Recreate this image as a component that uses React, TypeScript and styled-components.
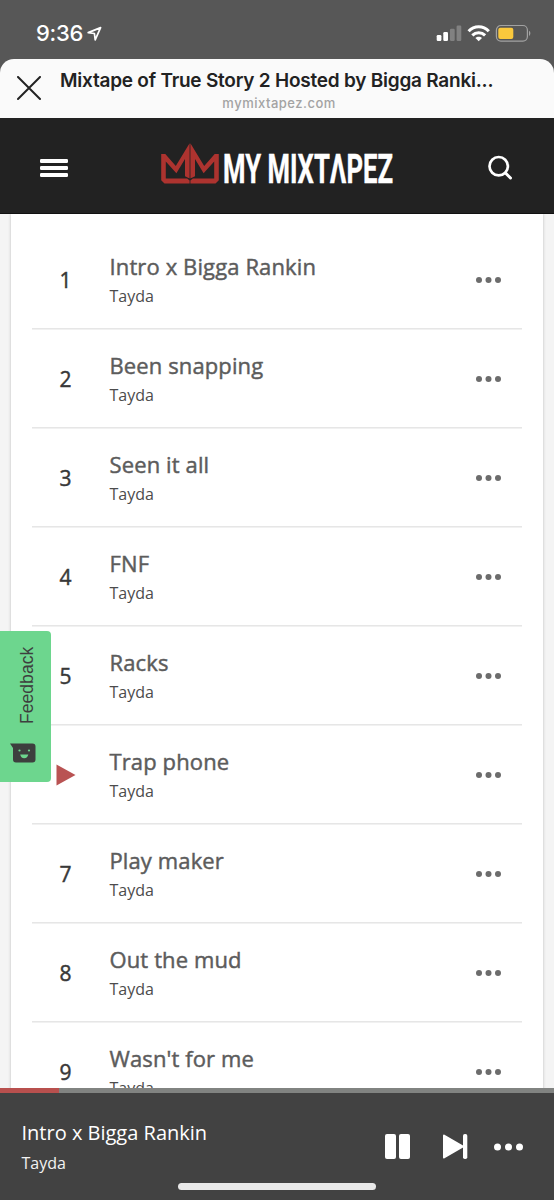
import React from "react";
import styled, { createGlobalStyle } from "styled-components";

const GlobalStyle = createGlobalStyle`
  * { box-sizing: border-box; }
  html, body { margin: 0; padding: 0; background: #575757; }
  body { font-family: "Open Sans", "Noto Sans", sans-serif; }
  button { border: 0; padding: 0; background: none; color: inherit; font: inherit; display: flex; }
`;

const Screen = styled.div`
  width: 554px;
  height: 1200px;
  display: flex;
  flex-direction: column;
  overflow: hidden;
  position: relative;
  background: #575757;
`;

const StatusBar = styled.div`
  height: 59px;
  flex: none;
  display: flex;
  justify-content: space-between;
  align-items: flex-start;
  padding: 20px 23px 0 36px;
  color: #fff;
`;

const Clock = styled.div`
  display: flex;
  align-items: flex-start;
  font: 500 22px/27px Inter, sans-serif;
  letter-spacing: -0.3px;
`;

const LocationIcon = styled.svg`
  margin: 6px 0 0 4px;
`;

const StatusIcons = styled.svg`
  display: block;
  margin-top: 4px;
`;

const BrowserBar = styled.header`
  height: 59px;
  flex: none;
  display: flex;
  background: #fafafa;
  border-radius: 14px 14px 0 0;
  padding: 0 61px 0 17px;
`;

const CloseButton = styled.button`
  margin-top: 17px;
  width: 43px;
  flex: none;
`;

const PageInfo = styled.div`
  flex: 1;
  display: flex;
  flex-direction: column;
  align-items: center;
  white-space: nowrap;
  font-family: Inter, sans-serif;
`;

const PageTitle = styled.div`
  margin-top: 9px;
  font-size: 19px;
  line-height: 25px;
  font-weight: 600;
  letter-spacing: -0.23px;
  color: #222;
`;

const PageHost = styled.div`
  margin-top: 2px;
  margin-left: 5px;
  font-size: 13px;
  line-height: 16px;
  font-weight: 500;
  letter-spacing: 0.5px;
  color: #a3a3a3;
`;

const SiteHeader = styled.nav`
  height: 96px;
  flex: none;
  display: flex;
  align-items: center;
  justify-content: space-between;
  padding: 4px 40px 0 40px;
  background: #222;
  border-bottom: 1px solid #111;
`;

const Logo = styled.svg`
  display: block;
  margin-right: 1px;
`;

const Page = styled.main`
  flex: 1;
  min-height: 0;
  overflow: hidden;
  padding: 0 11px;
  background: #f4f4f4;
`;

const TrackList = styled.ol`
  list-style: none;
  margin: 0;
  padding: 16px 21px 0;
  background: #fff;
  box-shadow: 0 0 3px rgba(0, 0, 0, 0.22);
`;

const Track = styled.li`
  height: 99px;
  display: flex;
  align-items: center;
  box-shadow: inset 0 -1px #e6e6e6, 0 1px #f1f1f1;
`;

const TrackNumber = styled.div`
  width: 67px;
  display: flex;
  justify-content: center;
  font-size: 21px;
  line-height: 28px;
  color: #383838;
  -webkit-text-stroke: 0.45px #383838;
`;

const TrackText = styled.div`
  flex: 1;
  padding: 0 0 2px 10.5px;
`;

const TrackTitle = styled.div`
  font-size: 22px;
  line-height: 30px;
  letter-spacing: 0.12px;
  color: #5c5c5c;
  -webkit-text-stroke: 0.45px #5c5c5c;
`;

const Artist = styled.div`
  font-size: 16px;
  line-height: 22px;
  margin-top: 4px;
`;

const TrackArtist = styled(Artist)`
  color: #4c4c4c;
`;

const PlayerArtist = styled(Artist)`
  color: #f2f2f2;
`;

const MoreButton = styled.button`
  margin-right: 21px;
`;

const Player = styled.footer`
  height: 112px;
  flex: none;
  background: #424242;
  color: #fff;
`;

const Progress = styled.div`
  height: 5px;
  background: #818381;
`;

const Elapsed = styled.div`
  width: 59px;
  height: 5px;
  background: #b8504e;
`;

const PlayerBody = styled.div`
  display: flex;
  height: 93px;
  padding: 24px 31px 0 21.5px;
  justify-content: space-between;
`;

const NowPlaying = styled.div`
  font-size: 20px;
  line-height: 31px;
`;

const Controls = styled.div`
  display: flex;
  height: 59px;
  align-items: center;
`;

const ControlButton = styled.button<{ $gap?: number }>`
  margin-right: ${(p) => p.$gap ?? 0}px;
`;

const HomeIndicator = styled.div`
  width: 198px;
  height: 7px;
  margin: -3px auto 0;
  border-radius: 4px;
  background: #e8e8e8;
`;

const FeedbackTab = styled.aside`
  position: absolute;
  left: 0;
  top: 631px;
  width: 51px;
  height: 151px;
  display: flex;
  flex-direction: column;
  align-items: center;
  gap: 18px;
  padding-top: 15px;
  background: #6dd68e;
  border-radius: 0 4px 4px 0;
`;

const FeedbackLabel = styled.span`
  height: 79px;
  writing-mode: vertical-rl;
  transform: rotate(180deg);
  font: 17.6px/22px "Liberation Sans", sans-serif;
  color: #3d3f3e;
  text-align: center;
  margin-left: 2px;
`;

const FaceIcon = styled.svg`
  margin-right: 5px;
`;

function Dots({ width, r, color }: { width: number; r: number; color: string }) {
  return (
    <svg width={width} height="10" fill={color}>
      <circle cx={r} cy="5" r={r} />
      <circle cx={width / 2} cy="5" r={r} />
      <circle cx={width - r} cy="5" r={r} />
    </svg>
  );
}

const tracks = [
  "Intro x Bigga Rankin",
  "Been snapping",
  "Seen it all",
  "FNF",
  "Racks",
  "Trap phone",
  "Play maker",
  "Out the mud",
  "Wasn't for me",
];
const playing = 5;

export default function App() {
  return (
    <Screen>
      <GlobalStyle />
      <StatusBar>
        <Clock>
          9:36
          <LocationIcon width="16" height="16" viewBox="0 0 16 16">
            <path d="M1.2 6.6L13.6 1.6L8.2 13.8L7.4 7.5Z" fill="none" stroke="#fff" strokeWidth="1.7" strokeLinejoin="round" />
          </LocationIcon>
        </Clock>
        <StatusIcons width="95" height="19" viewBox="0 0 95 19">
          <g fill="#fff">
            <rect x="0.7" y="11" width="4.7" height="6" rx="1.2" />
            <rect x="7.3" y="8" width="4.7" height="9" rx="1.2" />
            <g opacity="0.25">
              <rect x="14" y="4.7" width="4.7" height="12.3" rx="1.2" />
              <rect x="20.6" y="1.5" width="4.7" height="15.5" rx="1.2" />
            </g>
          </g>
          <g fill="none" stroke="#fff" strokeWidth="3">
            <path d="M32.6 7.3C38.2 1.2 47.2 1.2 52.8 7.3" />
            <path d="M36.3 11.4C39.9 7.8 45.5 7.8 49.1 11.4" />
          </g>
          <path d="M39.4 14C41.1 12.2 44.3 12.2 46 14L42.7 17.2Z" fill="#fff" />
          <rect x="60.4" y="1.5" width="31" height="15.6" rx="4.5" fill="none" stroke="#a2a2a2" strokeWidth="1.2" />
          <rect x="62.3" y="3.7" width="15" height="11.4" rx="2" fill="#fac83c" />
          <path d="M93 6.8C94.8 7.5 94.8 11.2 93 11.9Z" fill="#a2a2a2" />
        </StatusIcons>
      </StatusBar>

      <BrowserBar>
        <CloseButton aria-label="Close">
          <svg width="25" height="25" viewBox="0 0 25 25">
            <path d="M1 1L23 23M23 1L1 23" stroke="#222" strokeWidth="2" strokeLinecap="round" />
          </svg>
        </CloseButton>
        <PageInfo>
          <PageTitle>Mixtape of True Story 2 Hosted by Bigga Ranki...</PageTitle>
          <PageHost>mymixtapez.com</PageHost>
        </PageInfo>
      </BrowserBar>

      <SiteHeader>
        <button aria-label="Menu">
          <svg width="28" height="18" fill="#fff">
            <rect width="28" height="4" rx="1.2" />
            <rect y="7" width="28" height="4" rx="1.2" />
            <rect y="14" width="28" height="4" rx="1.2" />
          </svg>
        </button>
        <Logo width="240" height="52" viewBox="158 142 240 52" overflow="visible">
          <g fill="#ad332f">
            <path d="M161.2 154H165.3L175.8 166L189.6 143.2V178.5L185 176.3V159L176.4 173.2L165.8 161.5V178.6H187.2L189.6 180.6V183.4H164.5L161.2 180.2Z" />
            <path d="M218.8 154H214.7L204.2 166L190.4 143.2V178.5L195 176.3V159L203.6 173.2L214.2 161.5V178.6H192.8L190.4 180.6V183.4H215.5L218.8 180.2Z" />
          </g>
          <text
            x="223"
            y="183"
            textLength="170"
            lengthAdjust="spacingAndGlyphs"
            fill="#fff"
            stroke="#fff"
            strokeWidth="0.4"
            fontFamily="Roboto, sans-serif"
            fontWeight="700"
            fontSize="41"
          >
            MY MIXTΛPEZ
          </text>
        </Logo>
        <button aria-label="Search">
          <svg width="26" height="26" viewBox="0 0 26 26" fill="none" stroke="#fff" strokeLinecap="round">
            <circle cx="10.7" cy="11.2" r="9.2" strokeWidth="2.7" />
            <path d="M17.5 18L22.5 23" strokeWidth="3" />
          </svg>
        </button>
      </SiteHeader>

      <Page>
        <TrackList>
          {tracks.map((title, i) => (
            <Track key={title}>
              <TrackNumber>
                {i === playing ? (
                  <svg width="20" height="22">
                    <path d="M0.5 0.5L19.5 11L0.5 21.5Z" fill="#b95353" />
                  </svg>
                ) : (
                  i + 1
                )}
              </TrackNumber>
              <TrackText>
                <TrackTitle>{title}</TrackTitle>
                <TrackArtist>Tayda</TrackArtist>
              </TrackText>
              <MoreButton aria-label="More">
                <Dots width={25} r={3} color="#6c6c6c" />
              </MoreButton>
            </Track>
          ))}
        </TrackList>
      </Page>

      <Player>
        <Progress>
          <Elapsed />
        </Progress>
        <PlayerBody>
          <div>
            <NowPlaying>Intro x Bigga Rankin</NowPlaying>
            <PlayerArtist>Tayda</PlayerArtist>
          </div>
          <Controls>
            <ControlButton aria-label="Pause" $gap={33}>
              <svg width="25" height="25" fill="#fff">
                <rect width="11" height="25" rx="2" />
                <rect x="14" width="11" height="25" rx="2" />
              </svg>
            </ControlButton>
            <ControlButton aria-label="Next" $gap={26}>
              <svg width="25" height="25" fill="#fff">
                <path d="M1 1.5L20 12.5L1 23.5Z" stroke="#fff" strokeWidth="2" strokeLinejoin="round" />
                <rect x="20" width="4.3" height="25" rx="1.8" />
              </svg>
            </ControlButton>
            <ControlButton aria-label="More">
              <Dots width={29} r={3.5} color="#fff" />
            </ControlButton>
          </Controls>
        </PlayerBody>
        <HomeIndicator />
      </Player>

      <FeedbackTab>
        <FeedbackLabel>Feedback</FeedbackLabel>
        <FaceIcon width="26" height="20" viewBox="0 0 26 20">
          <path d="M0 0.5H22.5Q25.5 0.5 25.5 3.5V16.5Q25.5 19.5 22.5 19.5H6Q3 19.5 3 16.5V5Z" fill="#3d3f3e" />
          <g fill="#6dd68e">
            <circle cx="9.5" cy="7.5" r="1.1" />
            <circle cx="19" cy="7.5" r="1.1" />
            <path d="M10.2 11.5H18.3Q17.6 15.2 14.2 15.2T10.2 11.5Z" />
          </g>
        </FaceIcon>
      </FeedbackTab>
    </Screen>
  );
}
